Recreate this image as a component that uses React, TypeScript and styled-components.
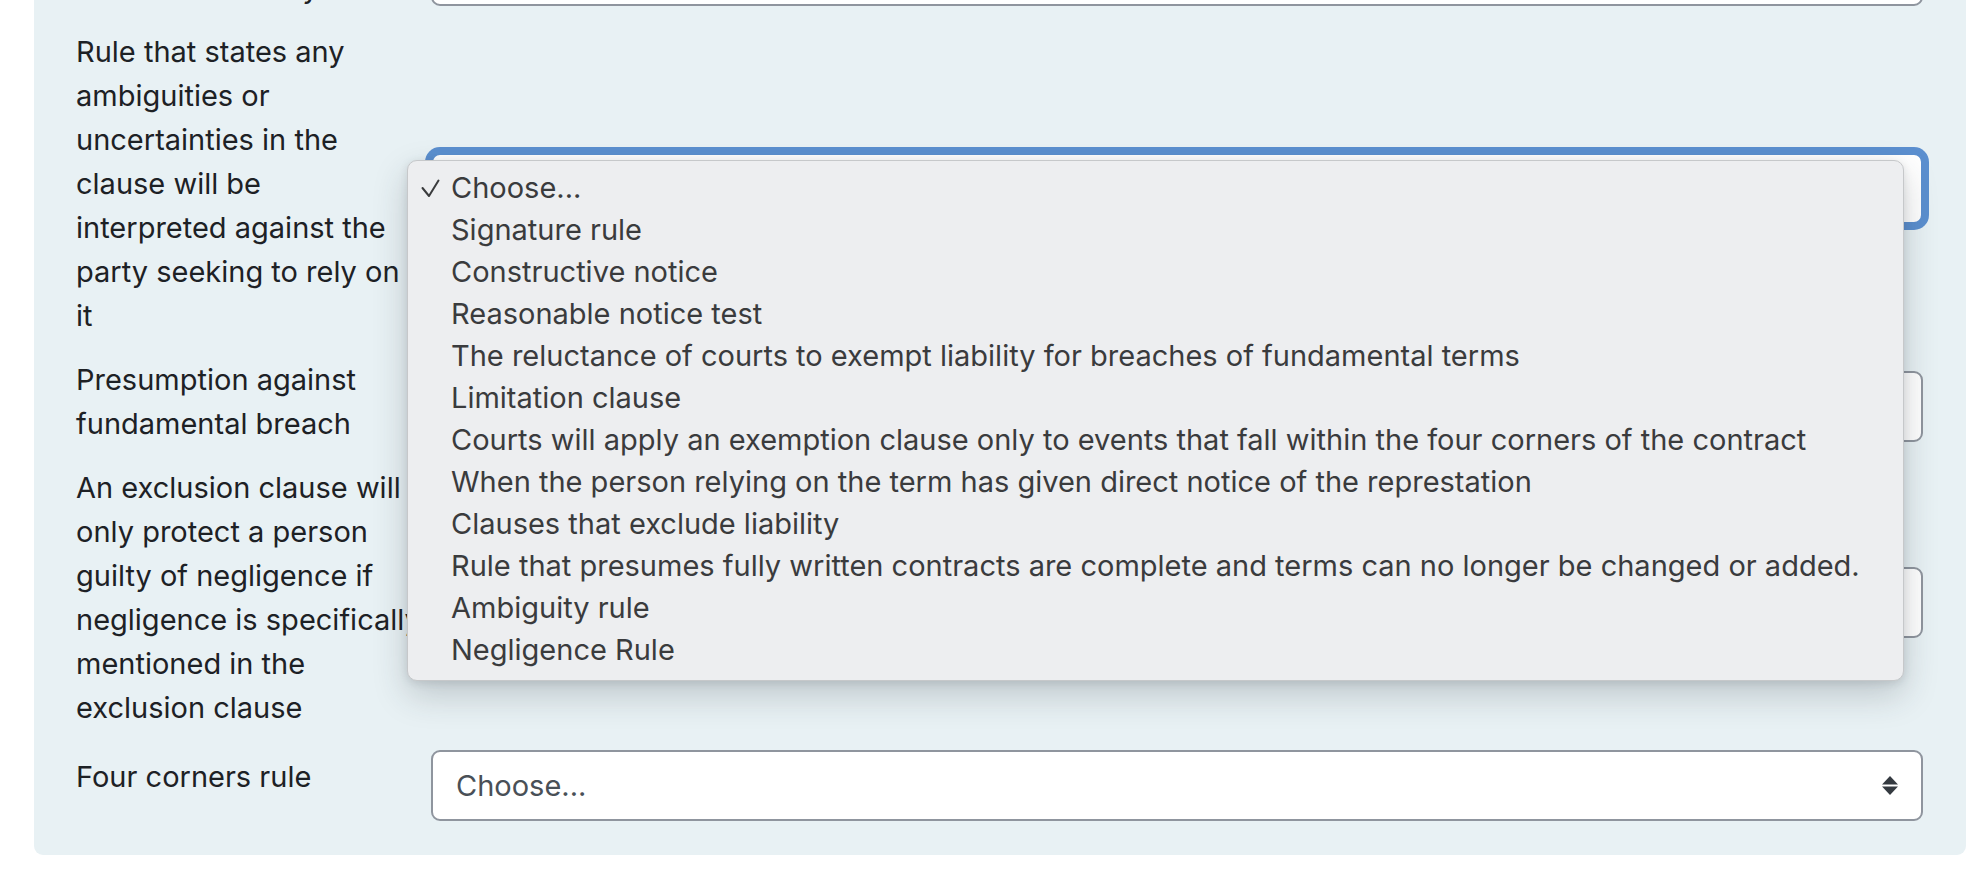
import styled, { createGlobalStyle } from 'styled-components';

const GlobalStyle = createGlobalStyle`
  html, body {
    margin: 0;
    background: #ffffff;
  }
  body {
    font-family: Inter, "Noto Sans", Roboto, sans-serif;
  }
`;

const Viewport = styled.div`
  height: 890px;
  overflow: hidden;
`;

const Formulation = styled.div`
  margin: -104px 18px 0 34px;
  padding: 20px 43px 28px 42px;
  background: #e8f1f4;
  border-radius: 9px;
`;

const Row = styled.div`
  display: grid;
  grid-template-columns: 340px 1fr;
  column-gap: 15px;
  align-items: center;
  padding: 6px 0;
`;

const Label = styled.div<{ $single?: boolean }>`
  margin-bottom: ${(p) => (p.$single ? '18px' : '8px')};
  font-size: 29px;
  line-height: 44px;
  color: #1d2125;
`;

const Line = styled.span`
  display: block;
  white-space: nowrap;
`;

const SelectCell = styled.div`
  position: relative;
`;

const SelectBox = styled.div<{ $focused?: boolean }>`
  box-sizing: border-box;
  height: 71px;
  display: flex;
  align-items: center;
  justify-content: space-between;
  padding: 0 23px 0 23px;
  background: #ffffff;
  border: 2px solid ${(p) => (p.$focused ? '#5b8fcf' : '#8f959e')};
  border-radius: 9px;
  box-shadow: ${(p) => (p.$focused ? '0 0 0 6px #5b8fcf' : 'none')};
  font-size: 29px;
  color: #495057;
`;

const Arrows = styled.svg`
  width: 16px;
  height: 19px;
  fill: #343a40;
`;

const Menu = styled.div`
  position: absolute;
  left: -24px;
  top: 7px;
  width: 1497px;
  box-sizing: border-box;
  padding: 6px 0 9px;
  background: #edeef0;
  border: 1px solid #c6c8ca;
  border-radius: 10px;
  box-shadow: 0 14px 34px rgba(40, 50, 60, 0.22), 0 2px 8px rgba(40, 50, 60, 0.12);
  z-index: 5;
`;

const MenuItem = styled.div`
  position: relative;
  height: 42px;
  line-height: 42px;
  padding-left: 43px;
  font-size: 29px;
  color: #3a3b3d;
  white-space: nowrap;
`;

const Check = styled.svg`
  position: absolute;
  left: 13px;
  top: 12px;
  width: 19px;
  height: 19px;
  fill: none;
  stroke: #3a3b3d;
  stroke-width: 2;
  stroke-linecap: round;
  stroke-linejoin: round;
`;

const options = [
  'Choose...',
  'Signature rule',
  'Constructive notice',
  'Reasonable notice test',
  'The reluctance of courts to exempt liability for breaches of fundamental terms',
  'Limitation clause',
  'Courts will apply an exemption clause only to events that fall within the four corners of the contract',
  'When the person relying on the term has given direct notice of the represtation',
  'Clauses that exclude liability',
  'Rule that presumes fully written contracts are complete and terms can no longer be changed or added.',
  'Ambiguity rule',
  'Negligence Rule',
];

const rows: { lines: string[]; open?: boolean }[] = [
  { lines: ['Clause that limits the', 'amount of liability'] },
  {
    lines: [
      'Rule that states any',
      'ambiguities or',
      'uncertainties in the',
      'clause will be',
      'interpreted against the',
      'party seeking to rely on',
      'it',
    ],
    open: true,
  },
  { lines: ['Presumption against', 'fundamental breach'] },
  {
    lines: [
      'An exclusion clause will',
      'only protect a person',
      'guilty of negligence if',
      'negligence is specifically',
      'mentioned in the',
      'exclusion clause',
    ],
  },
  { lines: ['Four corners rule'] },
];

const UpDown = () => (
  <Arrows viewBox="0 0 16 19">
    <polygon points="8,0 16,8.5 0,8.5" />
    <polygon points="0,10.5 16,10.5 8,19" />
  </Arrows>
);

const Dropdown = () => (
  <Menu>
    {options.map((o, i) => (
      <MenuItem key={o}>
        {i === 0 && (
          <Check viewBox="0 0 19 19">
            <polyline points="1.5,9 8,17 17.5,1.5" />
          </Check>
        )}
        {o}
      </MenuItem>
    ))}
  </Menu>
);

export default function App() {
  return (
    <>
      <GlobalStyle />
      <Viewport>
        <Formulation>
          {rows.map((r, i) => (
            <Row key={i}>
              <Label $single={r.lines.length === 1}>
                {r.lines.map((l) => (
                  <Line key={l}>{l}</Line>
                ))}
              </Label>
              <SelectCell>
                <SelectBox $focused={r.open}>
                  <span>Choose...</span>
                  <UpDown />
                </SelectBox>
                {r.open && <Dropdown />}
              </SelectCell>
            </Row>
          ))}
        </Formulation>
      </Viewport>
    </>
  );
}
